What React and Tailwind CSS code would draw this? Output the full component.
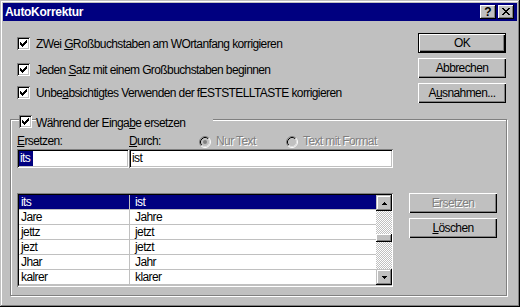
import React from "react";

function Check() {
  return (
    <div className="w-[13px] h-[13px] shrink-0 bg-white shadow-[inset_1px_1px_#808080,inset_-1px_-1px_#fff,inset_2px_2px_#000,inset_-2px_-2px_#c0c0c0]">
      <svg width="13" height="13" viewBox="0 0 13 13" shapeRendering="crispEdges" className="block">
        <path
          d="M3 5h1v3H3z M4 6h1v3H4z M5 7h1v3H5z M6 6h1v3H6z M7 5h1v3H7z M8 4h1v3H8z M9 3h1v3H9z"
          fill="#000"
        />
      </svg>
    </div>
  );
}

function Radio({ checked }) {
  return (
    <svg width="12" height="12" viewBox="0 0 12 12" className="block shrink-0">
      <circle cx="6" cy="6" r="4.5" fill="#c0c0c0" />
      <path d="M2.11 9.89A5.5 5.5 0 0 1 9.89 2.11" stroke="#808080" fill="none" />
      <path d="M9.89 2.11A5.5 5.5 0 0 1 2.11 9.89" stroke="#fff" fill="none" />
      <path d="M2.82 9.18A4.5 4.5 0 0 1 9.18 2.82" stroke="#000" fill="none" />
      <path d="M9.18 2.82A4.5 4.5 0 0 1 2.82 9.18" stroke="#dfdfdf" fill="none" />
      {checked && <circle cx="6" cy="6" r="2" fill="#808080" />}
    </svg>
  );
}

function Btn({ children, def, disabled }) {
  return (
    <div
      className={
        "h-[20px] w-[88px] flex items-center justify-center pt-px bg-[#c0c0c0] " +
        (def
          ? "border border-black shadow-[inset_1px_1px_#fff,inset_-1px_-1px_#000,inset_-2px_-2px_#808080] "
          : "shadow-[inset_1px_1px_#fff,inset_-1px_-1px_#000,inset_-2px_-2px_#808080] ") +
        (disabled ? "text-[#808080] [text-shadow:1px_1px_0_#fff]" : "text-black")
      }
    >
      {children}
    </div>
  );
}

function U({ children }) {
  return <span className="underline underline-offset-1 decoration-1">{children}</span>;
}

function ScrollBtn({ up }) {
  return (
    <div className="h-[16px] w-[16px] bg-[#c0c0c0] shadow-[inset_-1px_-1px_#000,inset_1px_1px_#c0c0c0,inset_-2px_-2px_#808080,inset_2px_2px_#fff] flex items-center justify-center">
      <svg width="5" height="3" viewBox="0 0 5 3" shapeRendering="crispEdges" className="block">
        {up ? (
          <path d="M2 0h1v1H2z M1 1h3v1H1z M0 2h5v1H0z" fill="#000" />
        ) : (
          <path d="M0 0h5v1H0z M1 1h3v1H1z M2 2h1v1H2z" fill="#000" />
        )}
      </svg>
    </div>
  );
}

const rows = [
  ["its", "ist"],
  ["Jare", "Jahre"],
  ["jettz", "jetzt"],
  ["jezt", "jetzt"],
  ["Jhar", "Jahr"],
  ["kalrer", "klarer"],
];

export default function App() {
  return (
    <div className="w-[520px] h-[307px] bg-[#c0c0c0] p-[3px] flex flex-col overflow-hidden text-[12px] leading-[13px] tracking-[-0.6px] text-black [font-family:'Liberation_Sans',Arial,sans-serif] shadow-[inset_-1px_-1px_#000,inset_1px_1px_#c0c0c0,inset_-2px_-2px_#808080,inset_2px_2px_#fff]">
      {/* Title bar */}
      <div className="h-[18px] shrink-0 bg-[#000080] flex items-start pl-[2px] pr-[3px]">
        <span className="mt-[3px] text-white font-bold tracking-[-0.3px]">AutoKorrektur</span>
        <div className="ml-auto mt-[2px] flex gap-[2px]">
          <div className="w-[16px] h-[14px] bg-[#c0c0c0] shadow-[inset_-1px_-1px_#000,inset_1px_1px_#fff,inset_-2px_-2px_#808080] flex items-center justify-center font-bold text-[12px] leading-[14px] tracking-normal">
            ?
          </div>
          <div className="w-[16px] h-[14px] bg-[#c0c0c0] shadow-[inset_-1px_-1px_#000,inset_1px_1px_#fff,inset_-2px_-2px_#808080] flex items-start pl-[4px] pt-[3px]">
            <svg width="8" height="7" viewBox="0 0 8 7" shapeRendering="crispEdges" className="block">
              <path
                d="M0 0h2v1H0zM6 0h2v1H6zM1 1h2v1H1zM5 1h2v1H5zM2 2h4v1H2zM3 3h2v1H3zM2 4h4v1H2zM1 5h2v1H1zM5 5h2v1H5zM0 6h2v1H0zM6 6h2v1H6z"
                fill="#000"
              />
            </svg>
          </div>
        </div>
      </div>

      {/* Top section */}
      <div className="flex justify-between pl-[14px] pr-[11px]">
        <div className="flex flex-col pt-[16px]">
          <div className="flex items-start gap-[6px] h-[13px]">
            <Check />
            <span className="mt-[1px]">
              ZWei <U>G</U>Roßbuchstaben am WOrtanfang korrigieren
            </span>
          </div>
          <div className="flex items-start gap-[6px] h-[13px] mt-[13px]">
            <Check />
            <span className="mt-[1px]">
              Jeden <U>S</U>atz mit einem Großbuchstaben beginnen
            </span>
          </div>
          <div className="flex items-start gap-[6px] h-[13px] mt-[10px]">
            <Check />
            <span className="mt-[1px]">
              Unbe<U>a</U>bsichtigtes Verwenden der fESTSTELLTASTE korrigieren
            </span>
          </div>
        </div>
        <div className="flex flex-col pt-[12px] gap-[5px]">
          <Btn def>OK</Btn>
          <Btn>Abbrechen</Btn>
          <Btn>
            A<U>u</U>snahmen...
          </Btn>
        </div>
      </div>

      {/* Group box */}
      <div className="relative mt-[16px] ml-[7px] w-[497px] h-[177px] shrink-0 border border-[#808080] shadow-[inset_1px_1px_#fff,1px_1px_#fff] pl-[6px] pt-[15px]">
        <div className="absolute left-[8px] top-[-5px] flex items-start gap-[4px]">
          <Check />
          <span className="mt-[2px] h-[13px] w-[177px] bg-[#c0c0c0]">
            Während der Einga<U>b</U>e ersetzen
          </span>
        </div>

        <div className="flex items-center h-[13px]">
          <span className="w-[112px]">
            <U>E</U>rsetzen:
          </span>
          <span className="w-[70px]">
            <U>D</U>urch:
          </span>
          <div className="flex items-center gap-[5px] w-[87px]">
            <Radio checked />
            <span className="text-[#808080] [text-shadow:1px_1px_0_#fff]">Nur Text</span>
          </div>
          <div className="flex items-center gap-[5px]">
            <Radio />
            <span className="text-[#808080] [text-shadow:1px_1px_0_#fff]">Text mit Format</span>
          </div>
        </div>

        <div className="flex mt-[1px]">
          <div className="w-[112px] h-[19px] p-[2px] bg-white shadow-[inset_1px_1px_#808080,inset_-1px_-1px_#fff,inset_2px_2px_#000,inset_-2px_-2px_#c0c0c0]">
            <span className="inline-block h-[15px] leading-[15px] bg-[#000080] text-white pl-[1px] pr-[3px]">its</span>
          </div>
          <div className="w-[264px] h-[19px] p-[2px] pl-[3px] leading-[15px] bg-white shadow-[inset_1px_1px_#808080,inset_-1px_-1px_#fff,inset_2px_2px_#000,inset_-2px_-2px_#c0c0c0]">
            ist
          </div>
        </div>

        <div className="flex gap-[16px] mt-[25px]">
          <div className="w-[376px] h-[94px] p-[1px] shadow-[inset_1px_1px_#808080,inset_-1px_-1px_#fff]">
            <div className="h-full flex bg-white border-t border-l border-b border-t-black border-l-black border-b-[#c0c0c0]">
              <div className="flex-1 flex flex-col">
                {rows.map(([a, b], i) => (
                  <div
                    key={i}
                    className={
                      "flex h-[15px] shrink-0 border-b border-[#c0c0c0] leading-[14px] " +
                      (i === 0 ? "bg-[#000080] text-white" : "")
                    }
                  >
                    <div className="w-[111px] border-r border-[#c0c0c0] pl-[2px]">{a}</div>
                    <div className="pl-[5px]">{b}</div>
                  </div>
                ))}
              </div>
              <div className="w-[16px] flex flex-col">
                <ScrollBtn up />
                <div className="flex-1 flex flex-col [background-image:conic-gradient(#fff_25%,#c0c0c0_0_50%,#fff_0_75%,#c0c0c0_0)] [background-size:2px_2px]">
                  <div className="h-[23px]" />
                  <div className="h-[8px] bg-[#c0c0c0] shadow-[inset_-1px_-1px_#000,inset_1px_1px_#fff,inset_-2px_-2px_#808080]" />
                </div>
                <ScrollBtn />
              </div>
            </div>
          </div>
          <div className="flex flex-col gap-[5px]">
            <Btn disabled>Ersetzen</Btn>
            <Btn>
              <U>L</U>öschen
            </Btn>
          </div>
        </div>
      </div>
    </div>
  );
}
